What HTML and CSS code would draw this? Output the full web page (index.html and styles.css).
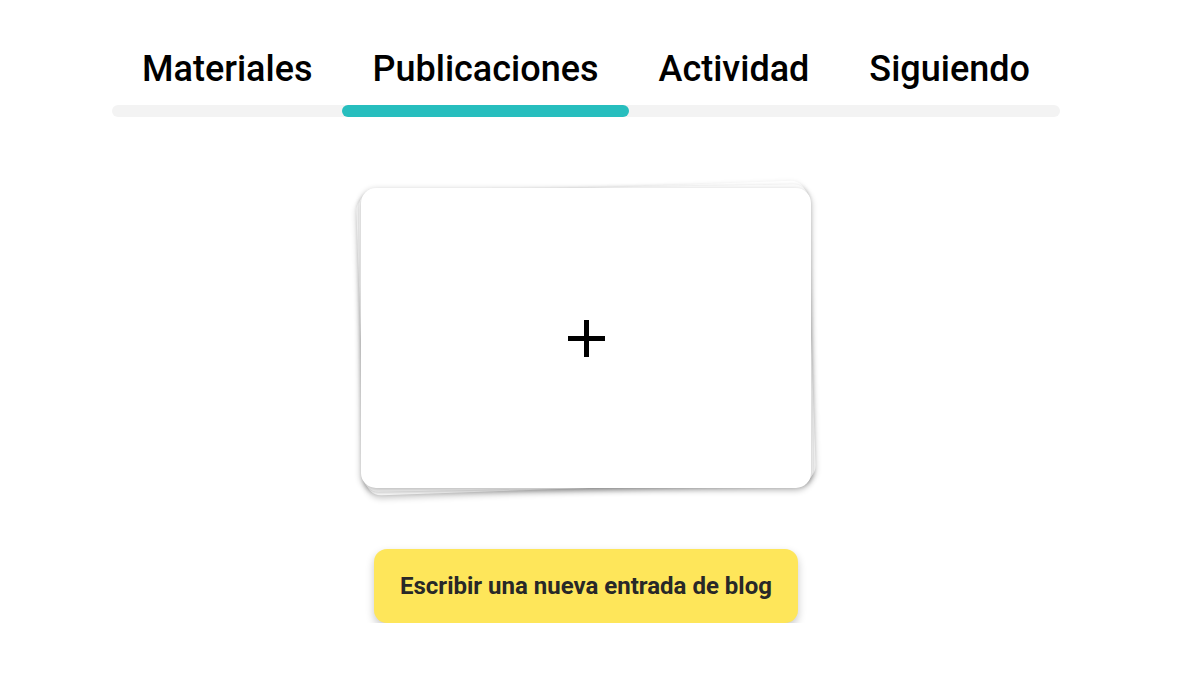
FILE: index.html
```html
<!DOCTYPE html>
<html lang="es">
<head>
    <meta charset="UTF-8">
    <meta name="viewport" content="width=device-width, initial-scale=1.0">
    <title>Publicaciones</title>
    <link rel="stylesheet" href="styles.css">
</head>
<body>
    <div id="page">
        <!-- tabs -->
        <nav class="tabs">
            <a class="tab">
                <span class="tab-label">Materiales</span>
                <span class="tab-track first"></span>
            </a>
            <a class="tab active">
                <span class="tab-label">Publicaciones</span>
                <span class="tab-track"><span class="tab-indicator"></span></span>
            </a>
            <a class="tab">
                <span class="tab-label">Actividad</span>
                <span class="tab-track"></span>
            </a>
            <a class="tab">
                <span class="tab-label">Siguiendo</span>
                <span class="tab-track last"></span>
            </a>
        </nav>

        <!-- new post card -->
        <div class="card-stack">
            <div class="card back-2"></div>
            <div class="card back-1"></div>
            <div class="card front">
                <svg class="plus" width="37" height="37" viewBox="0 0 37 37">
                    <rect x="16" y="0" width="5" height="37" fill="#000"/>
                    <rect x="0" y="16" width="37" height="5" fill="#000"/>
                </svg>
            </div>
        </div>

        <a class="button">Escribir una nueva entrada de blog</a>
    </div>
</body>
</html>
```

FILE: styles.css
```css
body {
    margin: 0;
    font-family: Roboto, "Liberation Sans", sans-serif;
    background-color: #fff;
    color: #000;
}
#page {
    width: 1172px;
    display: flex;
    flex-direction: column;
    align-items: center;
    padding-top: 48px;
}
.tabs {
    display: flex;
}
.tab {
    display: flex;
    flex-direction: column;
    cursor: pointer;
}
.tab-label {
    padding: 0 30px;
    font-size: 36px;
    font-weight: 500;
    line-height: 42px;
    text-align: center;
    margin-bottom: 15px;
}
.tab-track {
    display: block;
    height: 12px;
    background-color: #f3f3f3;
}
.tab-track.first {
    border-radius: 6px 0 0 6px;
}
.tab-track.last {
    border-radius: 0 6px 6px 0;
}
.tab-indicator {
    display: block;
    height: 12px;
    border-radius: 6px;
    background-color: #27bebe;
}
.card-stack {
    display: grid;
    margin-top: 71px;
}
.card {
    grid-area: 1 / 1;
    width: 450px;
    height: 300px;
    border-radius: 15px;
    background-color: #fff;
}
.back-2 {
    transform: rotate(-2deg);
    box-shadow: 0 3px 6px rgba(0, 0, 0, 0.22);
}
.back-1 {
    transform: rotate(-1deg);
    box-shadow: 0 1px 4px rgba(0, 0, 0, 0.15);
}
.front {
    position: relative;
    display: flex;
    align-items: center;
    justify-content: center;
    box-shadow: 0 2px 6px rgba(0, 0, 0, 0.3);
}
.button {
    margin-top: 61px;
    padding: 23px 26px;
    font-size: 24px;
    line-height: 28px;
    font-weight: bold;
    color: #282828;
    background-color: #fee65a;
    border-radius: 13px;
    box-shadow: 0 4px 8px rgba(0, 0, 0, 0.22);
    cursor: pointer;
}
```
